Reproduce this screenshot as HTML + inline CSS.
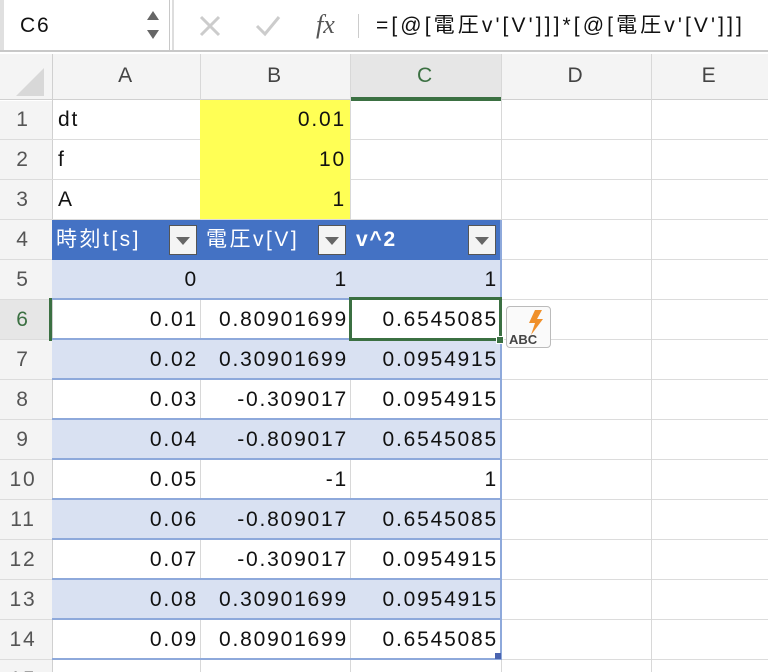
<!DOCTYPE html>
<html><head><meta charset="utf-8"><style>
*{margin:0;padding:0;box-sizing:border-box}
html,body{width:768px;height:672px;overflow:hidden}
body{background:#fff;font-family:"Liberation Sans","Noto Sans CJK JP",sans-serif;position:relative}
.a{position:absolute}
.t{position:absolute;font-size:21px;line-height:40px;color:#111;white-space:nowrap;letter-spacing:1.8px}
.r{text-align:right}
</style></head><body>
<div class="a" style="left:0;top:0;width:768px;height:52px;background:#fff;border-bottom:2px solid #c8c8c8"></div>
<div class="a" style="left:0;top:0;width:170px;height:50px;border-right:1px solid #c8c8c8"></div>
<div class="a" style="left:0;top:0;width:4px;height:50px;background:#e0e0e0"></div>
<div class="t" style="left:20px;top:6px">C6</div>
<svg class="a" style="left:144px;top:8px" width="18" height="34"><path d="M3 12 L9 3 L15 12Z M3 22 L9 31 L15 22Z" fill="#666"/></svg>
<div class="a" style="left:172px;top:0;width:2px;height:50px;background:#ddd"></div>
<svg class="a" style="left:198px;top:15px" width="24" height="22"><path d="M3 2 L21 20 M21 2 L3 20" stroke="#ccc" stroke-width="3"/></svg>
<svg class="a" style="left:254px;top:15px" width="28" height="22"><path d="M3 11 L11 19 L25 2" stroke="#ccc" stroke-width="3" fill="none"/></svg>
<div class="t" style="left:316px;top:5px;font-family:'Liberation Serif',serif;font-style:italic;font-size:26px;color:#555;letter-spacing:0">fx</div>
<div class="a" style="left:358px;top:14px;width:1px;height:24px;background:#ccc"></div>
<div class="t" style="left:376px;top:6px;font-size:21px;color:#111;letter-spacing:3.1px">=[@[電圧v'[V']]]*[@[電圧v'[V']]]</div>
<div class="a" style="left:0;top:54px;width:768px;height:46px;background:#f4f4f4;border-bottom:1px solid #d0d0d0"></div>
<svg class="a" style="left:14px;top:66px" width="32" height="32"><path d="M30 2 L30 30 L2 30Z" fill="#d8d8d8"/></svg>
<div class="a" style="left:52px;top:54px;width:1px;height:618px;background:#d0d0d0"></div>
<div class="a" style="left:350px;top:97px;width:151px;height:4px;background:#3b7042"></div>
<div class="a" style="left:350px;top:54px;width:151px;height:43px;background:#e6e6e6"></div>
<div class="t" style="left:52px;top:56px;width:148px;text-align:center;color:#444">A</div>
<div class="t" style="left:200px;top:56px;width:150px;text-align:center;color:#444">B</div>
<div class="t" style="left:350px;top:56px;width:151px;text-align:center;color:#3b7042">C</div>
<div class="t" style="left:501px;top:56px;width:150px;text-align:center;color:#444">D</div>
<div class="t" style="left:651px;top:56px;width:117px;text-align:center;color:#444">E</div>
<div class="a" style="left:0;top:101px;width:52px;height:571px;background:#f4f4f4"></div>
<div class="a" style="left:0;top:300px;width:52px;height:40px;background:#e6e6e6"></div>
<div id="g"></div>
<script>
var h='';
for(var k=1;k<=15;k++){var y=100+40*(k-1);
h+='<div class="a" style="left:0;top:'+(y+39)+'px;width:768px;height:1px;background:#dcdcdc"></div>';
h+='<div class="t" style="left:0;top:'+y+'px;width:46px;text-align:center;color:'+(k==6?'#3b7042':'#555')+'">'+k+'</div>';}
[200,350,501,651].forEach(function(x){h+='<div class="a" style="left:'+x+'px;top:54px;width:1px;height:618px;background:#d8d8d8"></div>';});
document.getElementById('g').innerHTML=h;
</script>
<div class="a" style="left:200px;top:100px;width:150px;height:119px;background:#ffff55"></div>
<div class="a" style="left:52px;top:220px;width:449px;height:40px;background:#4472c4"></div>
<div id="tb"></div>
<script>
var s='';
for(var k=5;k<=14;k++){var y=100+40*(k-1);
if(k%2==1)s+='<div class="a" style="left:52px;top:'+y+'px;width:449px;height:40px;background:#d9e1f2"></div>';
s+='<div class="a" style="left:52px;top:'+(y+38)+'px;width:449px;height:2px;background:#8ea9db"></div>';}
s+='<div class="a" style="left:500px;top:220px;width:2px;height:440px;background:#8ea9db"></div>';
document.getElementById('tb').innerHTML=s;
</script>
<div class="t" style="left:58px;top:100px">dt</div>
<div class="t" style="left:58px;top:140px">f</div>
<div class="t" style="left:58px;top:180px">A</div>
<div class="t r" style="left:200px;top:100px;width:146px">0.01</div>
<div class="t r" style="left:200px;top:140px;width:146px">10</div>
<div class="t r" style="left:200px;top:180px;width:146px">1</div>
<div class="t" style="left:56px;top:220px;color:#fff;letter-spacing:2.5px">時刻t[s]</div>
<div class="t" style="left:206px;top:220px;color:#fff;letter-spacing:2.5px">電圧v[V]</div>
<div class="t" style="left:356px;top:220px;color:#fff;font-weight:bold">v^2</div>
<div class="a" style="left:169px;top:225px;width:28px;height:30px;background:#f4f4f4;border:1px solid #555"></div>
<div class="a" style="left:318px;top:225px;width:28px;height:30px;background:#f4f4f4;border:1px solid #555"></div>
<div class="a" style="left:468px;top:225px;width:28px;height:30px;background:#f4f4f4;border:1px solid #555"></div>
<svg class="a" style="left:169px;top:225px" width="28" height="30"><path d="M7 12 L21 12 L14 20Z" fill="#666"/></svg>
<svg class="a" style="left:318px;top:225px" width="28" height="30"><path d="M7 12 L21 12 L14 20Z" fill="#666"/></svg>
<svg class="a" style="left:468px;top:225px" width="28" height="30"><path d="M7 12 L21 12 L14 20Z" fill="#666"/></svg>
<div id="d"></div>
<script>
var A=['0','0.01','0.02','0.03','0.04','0.05','0.06','0.07','0.08','0.09'],
B=['1','0.80901699','0.30901699','-0.309017','-0.809017','-1','-0.809017','-0.309017','0.30901699','0.80901699'],
C=['1','0.6545085','0.0954915','0.0954915','0.6545085','1','0.6545085','0.0954915','0.0954915','0.6545085'],t='';
for(var i=0;i<10;i++){var y=260+40*i;
t+='<div class="t r" style="left:52px;top:'+y+'px;width:146px">'+A[i]+'</div>';
t+='<div class="t r" style="left:200px;top:'+y+'px;width:148px">'+B[i]+'</div>';
t+='<div class="t r" style="left:350px;top:'+y+'px;width:148px">'+C[i]+'</div>';}
document.getElementById('d').innerHTML=t;
</script>
<div class="a" style="left:49px;top:298px;width:3px;height:43px;background:#3b7042"></div>
<div class="a" style="left:349px;top:297px;width:153px;height:44px;border:3px solid #3b7042"></div>
<div class="a" style="left:496px;top:336px;width:8px;height:8px;background:#3b7042;border:1px solid #fff"></div>
<div class="a" style="left:495px;top:653px;width:6px;height:6px;background:#4a64b0"></div>
<div class="a" style="left:506px;top:306px;width:45px;height:42px;border:1px solid #bbb;border-radius:4px;background:#fafafa"></div>
<svg class="a" style="left:526px;top:309px" width="22" height="28"><path d="M9 1 L3 14 L9 14 L5 26 L17 10 L11 10 L16 1Z" fill="#f0902a"/></svg>
<div class="t" style="left:509px;top:320px;font-size:13px;font-weight:bold;color:#444;letter-spacing:0">ABC</div>
</body></html>
